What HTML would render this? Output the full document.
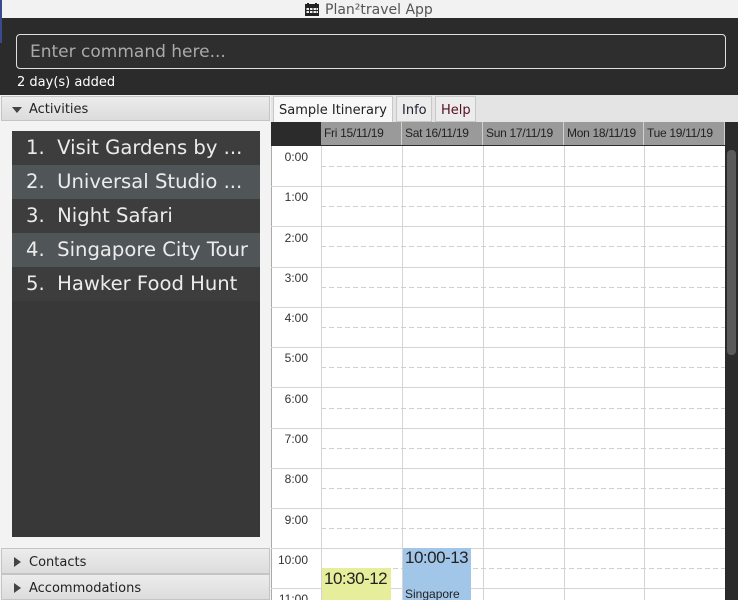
<!DOCTYPE html><html><head><style>
*{margin:0;padding:0;box-sizing:border-box}
html,body{width:738px;height:600px;overflow:hidden}
body{background:#2b2b2b;font-family:"DejaVu Sans","Liberation Sans",sans-serif;position:relative}
.a{position:absolute}
.hdr{background:linear-gradient(#ececec,#dcdcdc);border:1px solid #c4c4c4;color:#222;font-size:13px;padding-left:27px;line-height:25px}
.tri{position:absolute;left:10px;top:10px;width:0;height:0}
.it{position:absolute;left:12px;width:248px;height:34px;color:#ececec;font-size:19.6px;line-height:34px;padding-left:14px;white-space:nowrap;overflow:hidden}
.tm{position:absolute;left:272px;width:49px;text-align:right;padding-right:13px;font-family:"Liberation Sans",sans-serif;font-size:12px;color:#333}
.dh{position:absolute;top:122px;height:23px;background:#9a9a9a;font-family:"Liberation Sans",sans-serif;font-size:12px;line-height:22px;padding-left:3px;color:#222;border-right:1px solid #d0d0d0;letter-spacing:-0.3px}
</style></head><body>
<div class="a" style="left:0;top:0;width:738px;height:18px;background:#f2f2f2"></div>
<div class="a" style="left:0;top:0;width:2px;height:43px;background:#3a4a8a"></div>
<svg class="a" style="left:305px;top:3px" width="14" height="13" viewBox="0 0 14 13"><rect x="0" y="1" width="14" height="12" fill="#222"/><rect x="2" y="0" width="2" height="3" fill="#222"/><rect x="10" y="0" width="2" height="3" fill="#222"/><g fill="#eee"><rect x="1.5" y="5" width="2.5" height="2"/><rect x="5" y="5" width="2.5" height="2"/><rect x="8.5" y="5" width="2.5" height="2"/><rect x="1.5" y="8" width="2.5" height="2"/><rect x="5" y="8" width="2.5" height="2"/><rect x="8.5" y="8" width="2.5" height="2"/><rect x="11.5" y="5" width="1.5" height="2"/><rect x="11.5" y="8" width="1.5" height="2"/></g></svg>
<div class="a" style="left:325px;top:1px;font-size:14px;line-height:18px;color:#555">Plan²travel App</div>
<div class="a" style="left:16px;top:34px;width:710px;height:35px;border:1px solid #e0e0e0;border-radius:4px;background:#2e2e2e;color:#aaa;font-size:17px;line-height:35px;padding-left:13px">Enter command here...</div>
<div class="a" style="left:17px;top:74px;color:#fff;font-size:13px;line-height:18px">2 day(s) added</div>
<div class="a" style="left:0;top:95px;width:271px;height:505px;background:#f3f3f3"></div>
<div class="a hdr" style="left:1px;top:96px;width:269px;height:25px">Activities<div class="tri" style="border-left:5px solid transparent;border-right:5px solid transparent;border-top:6px solid #444"></div></div>
<div class="a" style="left:12px;top:131px;width:248px;height:406px;background:#383838"></div>
<div class="it" style="top:131px;background:#3d3d3e">1.&nbsp; Visit Gardens by ...</div>
<div class="it" style="top:165px;background:#505557">2.&nbsp; Universal Studio ...</div>
<div class="it" style="top:199px;background:#3d3d3e">3.&nbsp; Night Safari</div>
<div class="it" style="top:233px;background:#505557">4.&nbsp; Singapore City Tour</div>
<div class="it" style="top:267px;background:#3d3d3e">5.&nbsp; Hawker Food Hunt</div>
<div class="a hdr" style="left:1px;top:548px;width:269px;height:26px;line-height:27px">Contacts<div class="tri" style="border-top:5px solid transparent;border-bottom:5px solid transparent;border-left:7px solid #444;left:12px;top:8px"></div></div>
<div class="a hdr" style="left:1px;top:574px;width:269px;height:26px;line-height:27px">Accommodations<div class="tri" style="border-top:5px solid transparent;border-bottom:5px solid transparent;border-left:7px solid #444;left:12px;top:8px"></div></div>
<div class="a" style="left:271px;top:95px;width:467px;height:27px;background:#e4e4e4"></div>
<div class="a" style="left:273px;top:96px;width:120px;height:26px;background:#f8f8f8;border:1px solid #c8c8c8;border-bottom:none;font-size:13px;line-height:27px;padding-left:5px;color:#222">Sample Itinerary</div>
<div class="a" style="left:396px;top:96px;width:36px;height:26px;background:#ececec;border:1px solid #c8c8c8;font-size:13px;line-height:27px;padding-left:5px;color:#223">Info</div>
<div class="a" style="left:435px;top:96px;width:41px;height:26px;background:#ececec;border:1px solid #c8c8c8;font-size:13px;line-height:27px;padding-left:5px;color:#512">Help</div>
<div class="a" style="left:271px;top:122px;width:467px;height:24px;background:#2b2b2b"></div>
<div class="dh" style="left:321px;width:81px">Fri 15/11/19</div>
<div class="dh" style="left:402px;width:81px">Sat 16/11/19</div>
<div class="dh" style="left:483px;width:81px">Sun 17/11/19</div>
<div class="dh" style="left:564px;width:80px">Mon 18/11/19</div>
<div class="dh" style="left:644px;width:81px">Tue 19/11/19</div>
<div class="a" style="left:271px;top:146px;width:454px;height:454px;background:#fff;border-left:1px solid #aaa"></div>
<svg class="a" style="left:271px;top:146px" width="454" height="454">
<g stroke="#d4d4d4" stroke-width="1">
<line x1="50.5" y1="0" x2="50.5" y2="454"/><line x1="131.5" y1="0" x2="131.5" y2="454"/><line x1="212.5" y1="0" x2="212.5" y2="454"/><line x1="293.5" y1="0" x2="293.5" y2="454"/><line x1="373.5" y1="0" x2="373.5" y2="454"/>
<line x1="0" y1="40.5" x2="454" y2="40.5"/><line x1="0" y1="80.5" x2="454" y2="80.5"/><line x1="0" y1="121.5" x2="454" y2="121.5"/><line x1="0" y1="161.5" x2="454" y2="161.5"/><line x1="0" y1="201.5" x2="454" y2="201.5"/><line x1="0" y1="241.5" x2="454" y2="241.5"/><line x1="0" y1="282.5" x2="454" y2="282.5"/><line x1="0" y1="322.5" x2="454" y2="322.5"/><line x1="0" y1="362.5" x2="454" y2="362.5"/><line x1="0" y1="402.5" x2="454" y2="402.5"/><line x1="0" y1="442.5" x2="454" y2="442.5"/>
</g>
<g stroke="#d0d0d0" stroke-dasharray="5,3"><line x1="50" y1="20.5" x2="454" y2="20.5"/><line x1="50" y1="60.5" x2="454" y2="60.5"/><line x1="50" y1="100.5" x2="454" y2="100.5"/><line x1="50" y1="141.5" x2="454" y2="141.5"/><line x1="50" y1="181.5" x2="454" y2="181.5"/><line x1="50" y1="221.5" x2="454" y2="221.5"/><line x1="50" y1="262.5" x2="454" y2="262.5"/><line x1="50" y1="302.5" x2="454" y2="302.5"/><line x1="50" y1="342.5" x2="454" y2="342.5"/><line x1="50" y1="382.5" x2="454" y2="382.5"/><line x1="50" y1="422.5" x2="454" y2="422.5"/></g>
</svg>
<div class="tm" style="top:150px">0:00</div><div class="tm" style="top:190px">1:00</div><div class="tm" style="top:231px">2:00</div><div class="tm" style="top:271px">3:00</div><div class="tm" style="top:311px">4:00</div><div class="tm" style="top:351px">5:00</div><div class="tm" style="top:392px">6:00</div><div class="tm" style="top:432px">7:00</div><div class="tm" style="top:472px">8:00</div><div class="tm" style="top:513px">9:00</div><div class="tm" style="top:553px">10:00</div><div class="tm" style="top:592px">11:00</div>
<div class="a" style="left:322px;top:568px;width:69px;height:32px;background:#e6ee9c;font-family:'Liberation Sans',sans-serif;font-size:17px;color:#222;padding:1px 2px;letter-spacing:-0.5px">10:30-12</div>
<div class="a" style="left:403px;top:548px;width:68px;height:52px;background:#a2c6e8;font-family:'Liberation Sans',sans-serif;font-size:17px;color:#222;padding:0 2px;letter-spacing:-0.5px;line-height:20px">10:00-13<div style="font-size:12px;margin-top:16px;letter-spacing:0">Singapore</div></div>
<div class="a" style="left:725px;top:146px;width:13px;height:454px;background:#2b2b2b"></div>
<div class="a" style="left:727px;top:150px;width:9px;height:205px;background:#5a5a5a;border-radius:4px"></div>
</body></html>
